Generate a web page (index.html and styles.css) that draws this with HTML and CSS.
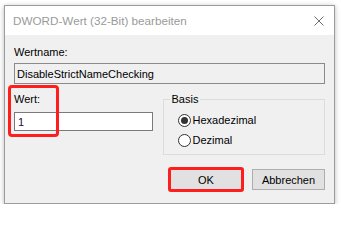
FILE: index.html
```html
<!DOCTYPE html>
<html lang="de">
<head>
<meta charset="utf-8">
<title>DWORD-Wert (32-Bit) bearbeiten</title>
<link rel="stylesheet" href="styles.css">
</head>
<body>
<div class="window">
  <div class="titlebar">
    <span class="title">DWORD-Wert (32-Bit) bearbeiten</span>
    <svg class="close" width="10" height="10" viewBox="0 0 10 10"><path d="M0.5 0.5 L9.5 9.5 M9.5 0.5 L0.5 9.5" stroke="#6e6e6e" stroke-width="1" fill="none"/></svg>
  </div>
  <div class="content">
    <div class="label">Wertname:</div>
    <div class="textbox readonly">DisableStrictNameChecking</div>
    <div class="row">
      <div class="left">
        <div class="label">Wert:</div>
        <div class="textbox value">1</div>
        <span class="mark mark-wert"></span>
      </div>
      <fieldset class="group">
        <legend>Basis</legend>
        <div class="radio"><span class="dot checked"></span><span>Hexadezimal</span></div>
        <div class="radio"><span class="dot"></span><span>Dezimal</span></div>
      </fieldset>
    </div>
    <div class="buttons">
      <div class="btn ok">OK<span class="mark mark-ok"></span></div>
      <div class="btn">Abbrechen</div>
    </div>
  </div>
</div>
</body>
</html>
```
FILE: styles.css
```css
html, body {
  margin: 0;
  padding: 0;
  background: #ffffff;
}
body {
  font-family: "Liberation Sans", Arial, sans-serif;
  font-size: 11px;
  color: #000;
}
.window {
  margin: 5px 0 0 4px;
  width: 329px;
  border: 1px solid #9c9c9c;
  background: #f0f0f0;
  box-shadow: 0 1px 5px rgba(0,0,0,0.28);
}
.titlebar {
  height: 29px;
  background: #fff;
  display: flex;
  align-items: center;
  justify-content: space-between;
  padding: 0 10px 0 8px;
}
.title {
  font-size: 11.7px;
  color: #9a9a9a;
  line-height: 14px;
  padding-top: 1px;
}
.close {
  display: block;
}
.content {
  padding: 11px 9px 13px 9px;
}
.label {
  line-height: 13px;
  height: 13px;
}
.textbox {
  box-sizing: border-box;
  border: 1px solid #7a7a7a;
  padding: 0 2px;
  display: flex;
  align-items: center;
}
.readonly {
  margin-top: 4px;
  height: 21px;
  background: #f0f0f0;
  border-color: #8a8a8a;
}
.row {
  display: flex;
  gap: 10px;
  margin-top: 9px;
  align-items: flex-start;
}
.left {
  width: 139px;
  position: relative;
}
.value {
  margin-top: 6px;
  height: 19px;
  background: #fff;
  padding-left: 3px;
  color: #2a0a3a;
}
.mark {
  position: absolute;
  border: 3px solid #ff1e1e;
  border-radius: 4px;
  box-sizing: border-box;
  pointer-events: none;
}
.mark-wert {
  left: -6px;
  top: -8px;
  width: 51px;
  height: 52px;
}
.group {
  margin: 0;
  width: 163px;
  box-sizing: border-box;
  border: 1px solid #dcdcdc;
  padding: 4px 0 4px 0;
  height: 62px;
}
.group legend {
  margin-left: 6px;
  padding: 0 2px;
  line-height: 13px;
}
.radio {
  display: flex;
  align-items: center;
  gap: 2px;
  height: 20px;
  padding-left: 14px;
}
.dot {
  flex: none;
  width: 13px;
  height: 13px;
  box-sizing: border-box;
  border: 1px solid #333;
  border-radius: 50%;
  background: #fff;
  display: flex;
  align-items: center;
  justify-content: center;
}
.dot.checked::after {
  content: "";
  width: 7px;
  height: 7px;
  border-radius: 50%;
  background: #333;
}
.buttons {
  display: flex;
  justify-content: flex-end;
  gap: 10px;
  margin-top: 14px;
}
.btn {
  position: relative;
  box-sizing: border-box;
  width: 73px;
  height: 21px;
  border: 1px solid #adadad;
  background: #e1e1e1;
  display: flex;
  align-items: center;
  justify-content: center;
}
.btn.ok {
  width: 72px;
}
.mark-ok {
  left: -3px;
  top: -3px;
  right: -3px;
  bottom: -3px;
  border-radius: 3px;
}
```
